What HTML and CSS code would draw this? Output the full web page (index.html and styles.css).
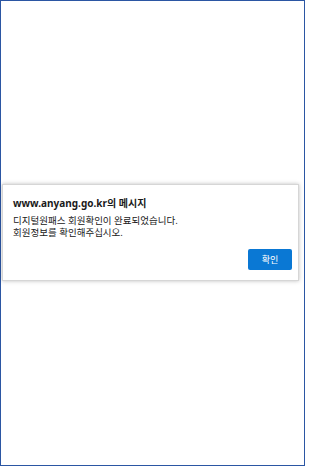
FILE: index.html
```html
<!DOCTYPE html>
<html lang="ko">
<head>
<meta charset="utf-8">
<link rel="stylesheet" href="styles.css">
</head>
<body>
<div class="frame">
  <div class="dialog">
    <div class="title">www.anyang.go.kr의 메시지</div>
    <div class="message">디지털원패스 회원확인이 완료되었습니다.<br>회원정보를 확인해주십시오.</div>
    <div class="actions">
      <button class="ok">확인</button>
    </div>
  </div>
</div>
</body>
</html>
```
FILE: styles.css
```css
html, body {
  margin: 0;
  padding: 0;
  background: #ffffff;
}
.frame {
  box-sizing: border-box;
  width: 305px;
  height: 466px;
  border: 1px solid #2b56a3;
  background: #ffffff;
  display: flex;
  flex-direction: column;
  padding: 183px 0 0 1px;
  font-family: "Noto Sans", "Noto Sans CJK KR", sans-serif;
}
.dialog {
  box-sizing: border-box;
  width: 297px;
  height: 97px;
  background: #ffffff;
  border: 1px solid #d6d6d6;
  box-shadow: 0 0 4px rgba(0, 0, 0, 0.25);
  padding: 12px 6px 10px 10px;
  display: flex;
  flex-direction: column;
}
.title {
  font-size: 10px;
  font-weight: 700;
  color: #1a1a1a;
  line-height: 13px;
}
.message {
  margin-top: 5px;
  font-size: 9.5px;
  line-height: 12px;
  color: #202020;
}
.actions {
  margin-top: auto;
  display: flex;
  justify-content: flex-end;
}
.ok {
  width: 44px;
  height: 21px;
  border: none;
  border-radius: 2px;
  background: #0a78d4;
  color: #ffffff;
  font-family: "Noto Sans CJK KR", sans-serif;
  font-size: 9px;
  padding: 0;
}
```
